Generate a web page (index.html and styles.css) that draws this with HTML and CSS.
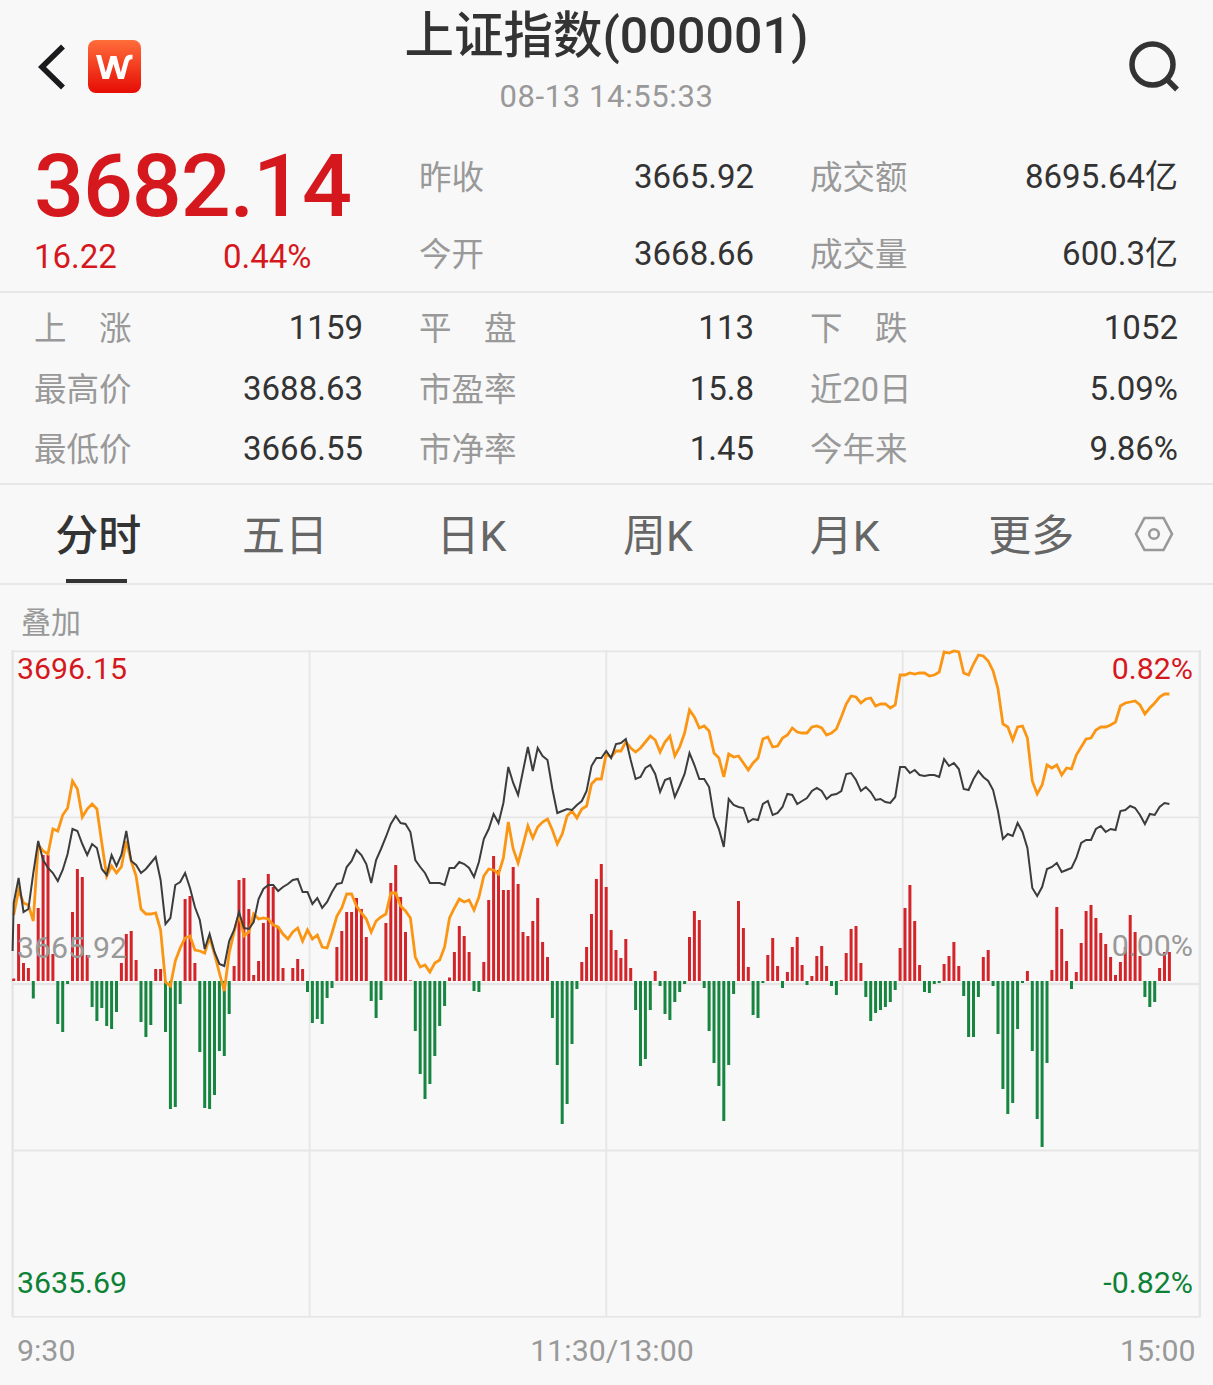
FILE: index.html
```html
<!DOCTYPE html>
<html lang="zh-CN">
<head>
	<meta charset="UTF-8">
	<meta name="viewport" content="width=device-width, initial-scale=1.0">
	<title>上证指数(000001)</title>
	<link rel="stylesheet" href="styles.css">
</head>
<body>
	<header class="header">
		<div class="header-left">
			<svg class="back" viewBox="0 0 28 46"><path d="M26 2.500L5 23L26 43.500"/></svg>
			<svg class="logo" viewBox="0 0 53 53">
				<defs>
					<linearGradient id="logo-bg" x1="0" y1="0" x2="0" y2="1">
						<stop offset="0" stop-color="#ff6d3a"/>
						<stop offset="1" stop-color="#e60c05"/>
					</linearGradient>
				</defs>
				<rect width="53" height="53" rx="8" fill="url(#logo-bg)"/>
				<path class="logo-mark" d="M8 15H13L17.800 32.500L22.500 16H28.500L32.800 32.500L36.300 19.800Q37.600 15 42 14.800H44.500V19.200H43Q41.300 19.400 40.600 21.800L36 39H30L25.500 24L21 39H14.500Z"/>
			</svg>
		</div>
		<div class="header-title">
			<h1>上证指数<span>(000001)</span></h1>
			<p>08-13 14:55:33</p>
		</div>
		<svg class="search" viewBox="0 0 52 52">
			<circle cx="24.500" cy="23.500" r="20.500"/>
			<path d="M38.500 38L49 48.500"/>
		</svg>
	</header>

	<section class="quote">
		<div class="price">
			<div class="price-now">3682.14</div>
			<div class="price-change"><span>16.22</span><span>0.44%</span></div>
		</div>
		<dl class="col">
			<div class="item"><dt>昨收</dt><dd>3665.92</dd></div>
			<div class="item"><dt>今开</dt><dd>3668.66</dd></div>
		</dl>
		<dl class="col">
			<div class="item"><dt>成交额</dt><dd>8695.64亿</dd></div>
			<div class="item"><dt>成交量</dt><dd>600.3亿</dd></div>
		</dl>
	</section>

	<section class="stats">
		<dl class="col">
			<div class="item"><dt>上　涨</dt><dd>1159</dd></div>
			<div class="item"><dt>最高价</dt><dd>3688.63</dd></div>
			<div class="item"><dt>最低价</dt><dd>3666.55</dd></div>
		</dl>
		<dl class="col">
			<div class="item"><dt>平　盘</dt><dd>113</dd></div>
			<div class="item"><dt>市盈率</dt><dd>15.8</dd></div>
			<div class="item"><dt>市净率</dt><dd>1.45</dd></div>
		</dl>
		<dl class="col">
			<div class="item"><dt>下　跌</dt><dd>1052</dd></div>
			<div class="item"><dt>近20日</dt><dd>5.09%</dd></div>
			<div class="item"><dt>今年来</dt><dd>9.86%</dd></div>
		</dl>
	</section>

	<nav class="tabs">
		<a class="tab active">分时</a>
		<a class="tab">五日</a>
		<a class="tab">日K</a>
		<a class="tab">周K</a>
		<a class="tab">月K</a>
		<a class="tab">更多</a>
		<svg class="settings" viewBox="0 0 40 36">
			<path d="M10.500 2H29.500L38 18L29.500 34H10.500L2 18Z"/>
			<circle cx="20" cy="18" r="4.800"/>
		</svg>
	</nav>

	<div class="overlay">叠加</div>

	<svg class="chart" viewBox="0 640 1213 745">
		<g class="grid">
			<path d="M12 651.300H1200M12 817.300H1200M12 1150.500H1200M12 1316.800H1200M309.600 650V1317M606.300 650V1317M902.700 650V1317"/>
			<path class="grid-bold" d="M12.600 650V1317M1199.800 650V1317M12 984H1200"/>
		</g>
		<path id="up" class="bar-up"/>
		<path id="down" class="bar-down"/>
		<polyline id="avg" class="line-avg"/>
		<polyline id="index" class="line-index"/>
		<g class="labels">
			<text class="up" x="17" y="679">3696.15</text>
			<text class="up end" x="1193" y="679">0.82%</text>
			<text x="17" y="958">3665.92</text>
			<text class="end" x="1193" y="955.500">0.00%</text>
			<text class="down" x="17" y="1292.500">3635.69</text>
			<text class="down end" x="1193" y="1292.500">-0.82%</text>
			<text x="17" y="1360.500">9:30</text>
			<text class="middle" x="612" y="1360.500">11:30/13:00</text>
			<text class="end" x="1195.500" y="1360.500">15:00</text>
		</g>
	</svg>

	<script src="chart.js"></script>
</body>
</html>
```

FILE: styles.css
```css
:root{
	--bg: #f8f8f8;
	--text: #333;
	--muted: #999;
	--line: #e7e7e7;
	--red: #d5181d;
	--green: #0c8236;
}

*{
	box-sizing: border-box;
}

body{
	margin: 0;
	background: var(--bg);
	color: var(--text);
	font-family: Roboto, "Noto Sans CJK SC", sans-serif;
	font-size: 32.5px;
	line-height: 1.2;
}

h1, p, dl, dd{
	margin: 0;
}

.header{
	display: grid;
	grid-template-columns: 200px 1fr 200px;
	height: 138px;
	padding: 0 33px 0 37px;
}

.header-left{
	display: flex;
	align-items: center;
	gap: 23px;
	height: 133px;
}

.back{
	width: 28px;
	height: 46px;
	fill: none;
	stroke: #1a1a1c;
	stroke-width: 5.6;
}

.logo{
	width: 53px;
	height: 53px;
}

.logo-mark{
	fill: #fff;
}

.header-title{
	text-align: center;
	margin-right: 4px;
}

.header-title h1{
	font-size: 49.5px;
	font-weight: 500;
	line-height: 72px;
	white-space: nowrap;
}

.header-title h1 span{
	font-size: 50px;
	letter-spacing: .1px;
}

.header-title p{
	color: var(--muted);
	font-size: 31px;
	line-height: 50px;
	letter-spacing: .6px;
}

.search{
	justify-self: end;
	width: 52px;
	height: 52px;
	margin-top: 41px;
	fill: none;
	stroke: var(--text);
	stroke-width: 5.5;
}

.quote, .stats{
	display: grid;
	grid-template-columns: 329px 335px 368px;
	column-gap: 56px;
	padding: 0 34px;
	border-bottom: 2px solid var(--line);
}

.quote{
	height: 155px;
}

.stats{
	height: 192px;
	padding-top: 5px;
}

.item{
	display: flex;
	justify-content: space-between;
	align-items: center;
	height: 60.5px;
	white-space: nowrap;
}

.quote .item{
	height: 77px;
}

.item dt{
	padding-top: 3px;
	color: var(--muted);
}

.item dd{
	font-size: 33px;
}

.price{
	color: var(--red);
}

.price-now{
	height: 95px;
	font-size: 88px;
	font-weight: 500;
	line-height: 95px;
	letter-spacing: -1.1px;
}

.price-change{
	display: flex;
	line-height: 48px;
	font-size: 33px;
}

.price-change span{
	flex: 0 0 189px;
}

.tabs{
	display: flex;
	align-items: center;
	height: 100px;
	padding-left: 5px;
	border-bottom: 2px solid var(--line);
}

.tab{
	width: 186.6px;
	height: 98px;
	color: #666;
	font-size: 43px;
	line-height: 103px;
	text-align: center;
}

.tab.active{
	color: var(--text);
	font-weight: 500;
}

.tab.active::after{
	content: "";
	display: block;
	width: 61px;
	height: 4px;
	margin: -9px 0 0 61px;
	background: var(--text);
}

.settings{
	width: 40px;
	height: 36px;
	margin-left: 9px;
	fill: none;
	stroke: var(--muted);
	stroke-width: 2.6;
}

.overlay{
	height: 55px;
	padding: 11px 21px 0;
	color: var(--muted);
	font-size: 30px;
	line-height: 54px;
}

.chart{
	display: block;
	width: 1213px;
	height: 745px;
}

.grid path{
	stroke: #e6e6e6;
	stroke-width: 1.8;
}

.grid .grid-bold{
	stroke-width: 2.5;
}

.bar-up, .bar-down{
	fill: none;
	stroke-width: 3;
}

.bar-up{
	stroke: #d3242a;
}

.bar-down{
	stroke: #168540;
}

.line-avg, .line-index{
	fill: none;
}

.line-avg{
	stroke: #fb9615;
	stroke-width: 2.8;
}

.line-index{
	stroke: #3c3c3c;
	stroke-width: 2;
}

.labels{
	font-size: 30.3px;
	fill: var(--muted);
}

.labels .up{
	fill: var(--red);
}

.labels .down{
	fill: var(--green);
}

.labels .middle{
	text-anchor: middle;
}

.labels .end{
	text-anchor: end;
}
```

FILE: chart.js
```js
// one value per minute
const bars = [
	2.5,57,18,13,-17.5,73,126,126,27,-43,-51,-3,69,112,104,26,-26,-40,-27,-45,
	-48,-31,18,47,50,21,-41,-56,-44,12,12,-51,-128,-126,-23,82,85,18,-71,-127,
	-128,-114,-70,-75,-33,15,101,103,72,6,20,58,107,94,54,13,0,13,22,12,
	-11,-42,-38,-43,-17,-7,34,50,69,69,83,72,44,-20,-37,-19,58,98,116,84,
	49,.7,-50,-93,-118,-103,-75,-45,-25,3.5,29,55,45,29,-10,-11,19,81,125,111,
	91,91,114,97,49,45,60,83,39,24,-37,-84,-143,-123,-63,-8,19,34,67,102,
	117,94,51,31,23,42,13,-29,-85,-78,-29,10,-5,-33,-39,-21,-11,-3,44,70,
	61,-7,-50,-82,-105,-140,-84,-13,80,53,14,-34,-37,-2,26,43,15,-7,9,34,
	44,16,-4,5,25,35,15,-5,-14,1,28,52,55,18,-16,-40,-32,-29,-26,-21,
	-9,33,73,96,60,16,-11,-12,-3,-2,17,25,39,15,-15,-56,-56,-16,24,31,
	-5,-53,-108,-133,-122,-48,-2,10,-70,-138,-166,-82,11,74,52,20,-8,9,38,70,
	76,63,48,37,24,6,19,34,66,49,25,-16,-26,-21,13,29,29
]

const index = [
	903,878,912,909,873,841,860,868,873,881,870,854,829,831,844,855,844,848,869,875,
	855,866,855,831,861,865,873,869,863,857,880,924,918,885,882,873,888,907,920,949,
	934,952,964,966,941,930,912,928,929,922,899,889,885,885,891,887,884,880,879,892,
	892,904,898,908,902,892,884,883,867,861,850,855,864,883,860,849,837,824,816,823,
	824,832,860,867,873,883,883,883,885,868,868,862,864,868,877,862,839,829,814,823,
	803,767,783,795,771,747,771,748,756,760,789,813,811,809,810,805,801,791,766,758,
	758,751,758,744,743,739,760,779,777,768,765,774,792,780,778,797,786,774,753,765,
	779,779,787,817,829,847,799,805,807,808,822,819,820,804,801,815,813,807,794,795,
	804,801,798,791,788,791,799,795,794,791,774,773,780,791,787,792,800,799,802,803,
	797,767,767,773,770,775,776,775,775,777,759,766,763,769,789,790,779,771,777,781,
	790,811,839,834,836,823,832,848,888,896,887,869,867,863,872,870,868,858,843,840,
	840,829,826,832,829,830,811,810,806,808,815,824,814,815,807,803,804
]

const avg = [
	915,890,903,905,921,845,851,854,829,831,815,808,781,789,817,809,804,809,843,876,
	866,873,867,841,861,876,909,914,914,913,930,982,986,961,948,938,936,950,951,953,
	937,954,973,991,953,932,914,936,932,914,919,918,919,925,927,934,939,932,928,941,
	930,939,935,947,948,933,916,908,894,894,906,913,919,932,921,917,914,893,893,906,
	911,918,957,967,965,972,963,960,947,918,908,899,902,900,910,897,876,869,870,874,
	858,822,849,863,845,826,838,827,822,819,830,844,834,816,811,818,809,806,784,779,
	779,754,757,751,751,742,748,752,748,742,736,740,752,742,736,756,747,733,710,717,
	728,726,731,753,758,777,754,757,756,763,770,763,758,739,737,747,746,738,735,728,
	732,733,733,727,726,728,735,733,729,717,704,696,697,703,699,698,706,704,704,708,
	705,675,675,673,674,673,673,676,675,672,652,653,651,652,673,675,664,655,656,661,
	671,689,724,727,740,727,726,738,781,794,785,765,768,765,775,768,769,755,747,739,
	738,730,727,727,725,722,706,703,702,701,705,714,708,703,697,694,694
]

const base = 981
const x = i => (13.7 + i * 4.897).toFixed(1)
const points = list => list.map((y, i) => `${x(i)},${y}`).join(' ')
const sticks = test => bars.map((v, i) => test(v) ? `M${x(i)} ${base}V${base - v}` : '').join('')

document.querySelector('#up').setAttribute('d', sticks(v => v > 0))
document.querySelector('#down').setAttribute('d', sticks(v => v < 0))
document.querySelector('#avg').setAttribute('points', points(avg))
document.querySelector('#index').setAttribute('points', '12.6,951 ' + points(index))
```
